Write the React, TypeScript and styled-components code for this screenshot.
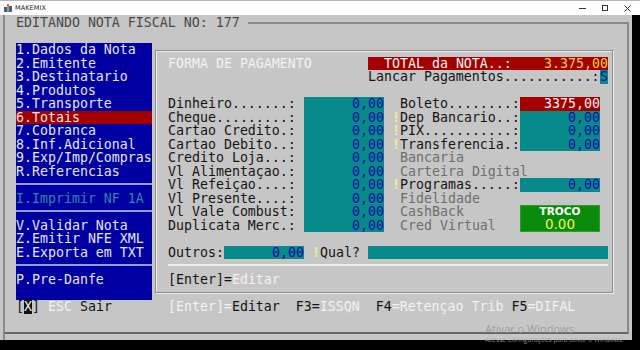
import styled, { createGlobalStyle } from "styled-components";

const CH = 8;
const ROW = 13.5;

const GlobalStyle = createGlobalStyle`
  html, body { margin: 0; padding: 0; background: #000; }
  body { font-family: "DejaVu Sans Mono", "Liberation Mono", monospace; }
`;

const Window = styled.div`
  position: relative;
  width: 640px;
  height: 350px;
  display: flex;
  flex-direction: column;
  background: #000;
  overflow: hidden;
`;

const TitleBar = styled.div`
  flex: none;
  height: 15px;
  box-sizing: border-box;
  border-top: 1px solid #b4b4b4;
  background: #fff;
  display: flex;
  align-items: center;
  padding: 0 9px 0 4px;
  font-family: "DejaVu Sans", sans-serif;
  font-size: 6.5px;
  color: #222;
`;

const AppName = styled.span`
  margin-left: 3px;
  flex: 1;
  letter-spacing: 0.1px;
`;

const Controls = styled.div`
  display: flex;
  align-items: center;
  gap: 16px;
`;

const Client = styled.div`
  flex: none;
  height: 325px;
  display: flex;
`;

const Screen = styled.div`
  width: 632px;
  box-sizing: border-box;
  padding-left: 3px;
  background: #c6c6c6;
  display: flex;
`;

const Frame = styled.div`
  flex: 1;
  display: flex;
  flex-direction: column;
  border-left: 2px solid #8a8a8a;
`;

const HeaderRow = styled.div`
  flex: none;
  height: 16px;
  display: flex;
`;

const Caption = styled.div`
  margin-left: 11px;
  font-size: 13.28px;
  line-height: 16px;
  color: #4a4a4a;
  white-space: pre;
`;

const HeaderRule = styled.div`
  flex: 1;
  margin: 7px 3px 0 8px;
  border-top: 2px solid #8a8a8a;
  border-right: 2px solid #8a8a8a;
`;

const Body = styled.div`
  flex: 1;
  margin: 0 3px 6px 0;
  border-right: 2px solid #8a8a8a;
  border-bottom: 2px solid #666;
  display: flex;
  flex-direction: column;
  font-size: 13.28px;
  line-height: ${ROW}px;
  white-space: pre;
`;

const Workspace = styled.div`
  display: flex;
  align-items: flex-start;
  padding: 12px 0 0 11px;
`;

const Menu = styled.div`
  width: ${17 * CH}px;
  background: #0000a2;
  padding-bottom: ${ROW}px;
`;

const MenuItem = styled.div<{ $active?: boolean; $dim?: boolean }>`
  height: ${ROW}px;
  color: ${(p) => (p.$dim ? "#2e86a8" : "#e6e6e6")};
  background: ${(p) => (p.$active ? "#a40000" : "transparent")};
`;

const MenuSep = styled.div`
  height: ${ROW}px;
  display: flex;
  align-items: center;
  &::after {
    content: "";
    flex: 1;
    height: 2px;
    margin-top: -2px;
    background: #9a9ad6;
  }
`;

const Panel = styled.div`
  margin: 7px 0 0 3px;
  width: 458px;
  height: 243px;
  box-sizing: border-box;
  padding: 5.5px 0 0 12px;
  border: 1px solid #8c8c8c;
  box-shadow: inset 1px 1px 0 #ececec, 1px 1px 0 #ececec;
  color: #141414;
`;

const Line = styled.div<{ $indent?: number }>`
  display: flex;
  height: ${ROW}px;
  padding-left: ${(p) => (p.$indent ?? 0) * CH}px;
`;

const Cell = styled.span<{ $w: number; $tone?: "light" | "off" | "dark" }>`
  flex: none;
  width: ${(p) => p.$w * CH}px;
  overflow: visible;
  color: ${(p) => (p.$tone === "light" ? "#f2f2f2" : p.$tone === "off" ? "#6e6e6e" : "#141414")};
`;

const Light = styled.span`
  color: #f2f2f2;
`;

const TotalBar = styled.div`
  width: ${30 * CH}px;
  display: flex;
  justify-content: space-between;
  padding-left: ${2 * CH}px;
  box-sizing: border-box;
  background: #a40000;
  color: #f2f2f2;
`;

const TotalValue = styled.span`
  color: #f6cf45;
`;

const Field = styled.span<{ $w?: number; $tone?: "teal" | "red" }>`
  flex: none;
  width: ${(p) => (p.$w ?? 10) * CH}px;
  height: ${ROW}px;
  text-align: right;
  background: ${(p) => (p.$tone === "red" ? "#a40000" : "#088a8a")};
  color: ${(p) => (p.$tone === "red" ? "#f4f4f4" : "#0c0ca8")};
`;

const Marker = styled.span`
  flex: none;
  width: ${CH}px;
  text-align: center;
  font-weight: bold;
  color: #f6f27e;
`;

const Gap = styled.span<{ $w?: number }>`
  flex: none;
  width: ${(p) => (p.$w ?? 1) * CH}px;
`;

const PayBlock = styled.div`
  display: flex;
`;

const Column = styled.div`
  display: flex;
  flex-direction: column;
`;

const TrocoRow = styled.div`
  display: flex;
`;

const TrocoBox = styled.div`
  width: ${10 * CH}px;
  height: ${2 * ROW}px;
  box-sizing: border-box;
  background: #0a8a0a;
  border: 1px solid #2aa02a;
  display: flex;
  flex-direction: column;
  align-items: center;
  justify-content: center;
  font-family: "DejaVu Sans", "Liberation Sans", sans-serif;
  white-space: normal;
`;

const TrocoTitle = styled.span`
  font-size: 10.5px;
  font-weight: bold;
  line-height: 11px;
  color: #fff;
`;

const TrocoValue = styled.span`
  font-size: 13.5px;
  line-height: 14px;
  color: #f2f85a;
`;

const RuleLine = styled.div`
  height: ${ROW}px;
  width: ${55 * CH}px;
  display: flex;
  align-items: center;
  &::after {
    content: "";
    flex: 1;
    height: 2px;
    margin-top: -1px;
    background: #eeeeee;
  }
`;

const StatusRow = styled.div`
  display: flex;
  height: ${ROW}px;
  padding-left: 11px;
  color: #141414;
`;

const Inverse = styled.span`
  background: #111;
  color: #f2f2f2;
`;

const Watermark = styled.div`
  position: absolute;
  left: 485px;
  top: 323px;
  font-family: "Open Sans", "DejaVu Sans", sans-serif;
  color: rgba(150, 150, 150, 0.85);
  line-height: 1;
`;

const WatermarkTitle = styled.div`
  font-size: 11px;
`;

const WatermarkNote = styled.div`
  margin-top: 3px;
  font-size: 6.6px;
  color: rgba(175, 175, 175, 0.8);
`;

type MenuEntry = { label?: string; active?: boolean; dim?: boolean; sep?: boolean };

const menu: MenuEntry[] = [
  { label: "1.Dados da Nota" },
  { label: "2.Emitente" },
  { label: "3.Destinatario" },
  { label: "4.Produtos" },
  { label: "5.Transporte" },
  { label: "6.Totais", active: true },
  { label: "7.Cobranca" },
  { label: "8.Inf.Adicional" },
  { label: "9.Exp/Imp/Compras" },
  { label: "R.Referencias" },
  { sep: true },
  { label: "I.Imprimir NF 1A", dim: true },
  { sep: true },
  { label: "V.Validar Nota" },
  { label: "Z.Emitir NFE XML" },
  { label: "E.Exporta em TXT" },
  { sep: true },
  { label: "P.Pre-Danfe" },
];

const leftRows = [
  "Dinheiro.......:",
  "Cheque.........:",
  "Cartao Credito.:",
  "Cartao Debito..:",
  "Credito Loja...:",
  "Vl Alimentaçao.:",
  "Vl Refeiçao....:",
  "Vl Presente....:",
  "Vl Vale Combust:",
  "Duplicata Merc.:",
];

type RightRow = { label: string; value?: string; tone?: "red" | "teal"; mark?: boolean };

const rightRows: RightRow[] = [
  { label: "Boleto........:", value: "3375,00", tone: "red" },
  { label: "Dep Bancario..:", value: "0,00", tone: "teal", mark: true },
  { label: "PIX...........:", value: "0,00", tone: "teal", mark: true },
  { label: "Transferencia.:", value: "0,00", tone: "teal", mark: true },
  { label: "Bancaria" },
  { label: "Carteira Digital" },
  { label: "Programas.....:", value: "0,00", tone: "teal", mark: true },
  { label: "Fidelidade" },
];

function AppIcon() {
  return (
    <svg width="8" height="8" viewBox="0 0 8 8">
      <rect x="0" y="3" width="3" height="5" fill="#2b5fc4" />
      <rect x="3" y="1" width="2" height="7" fill="#e08a1e" />
      <rect x="5" y="2" width="3" height="6" fill="#2b5fc4" />
      <circle cx="4" cy="1" r="1" fill="#d23a2a" />
    </svg>
  );
}

function WinControls() {
  return (
    <Controls>
      <svg width="7" height="7" viewBox="0 0 7 7">
        <line x1="0" y1="3.5" x2="7" y2="3.5" stroke="#333" strokeWidth="1" />
      </svg>
      <svg width="6" height="6" viewBox="0 0 6 6">
        <rect x="0.5" y="0.5" width="5" height="5" fill="none" stroke="#333" strokeWidth="1" />
      </svg>
      <svg width="7" height="7" viewBox="0 0 7 7">
        <path d="M0.5 0.5 L6.5 6.5 M6.5 0.5 L0.5 6.5" stroke="#333" strokeWidth="1" />
      </svg>
    </Controls>
  );
}

export default function App() {
  return (
    <Window>
      <GlobalStyle />
      <TitleBar>
        <AppIcon />
        <AppName>MAKEMIX</AppName>
        <WinControls />
      </TitleBar>
      <Client>
        <Screen>
          <Frame>
            <HeaderRow>
              <Caption>EDITANDO NOTA FISCAL NO: 177</Caption>
              <HeaderRule />
            </HeaderRow>
            <Body>
              <Workspace>
                <Menu>
                  {menu.map((m, i) =>
                    m.sep ? (
                      <MenuSep key={i} />
                    ) : (
                      <MenuItem key={i} $active={m.active} $dim={m.dim}>
                        {m.label}
                      </MenuItem>
                    )
                  )}
                </Menu>
                <Panel>
                  <Line>
                    <Cell $w={25} $tone="light">FORMA DE PAGAMENTO</Cell>
                    <TotalBar>
                      <span>TOTAL da NOTA..:</span>
                      <TotalValue>3.375,00</TotalValue>
                    </TotalBar>
                  </Line>
                  <Line $indent={25}>
                    <Cell $w={29}>Lancar Pagamentos...........:</Cell>
                    <Field $w={1}>S</Field>
                  </Line>
                  <Line />
                  <PayBlock>
                    <Column>
                      {leftRows.map((label) => (
                        <Line key={label}>
                          <Cell $w={16}>{label}</Cell>
                          <Gap />
                          <Field>0,00</Field>
                        </Line>
                      ))}
                    </Column>
                    <Gap />
                    <Column>
                      {rightRows.map((r) => (
                        <Line key={r.label}>
                          <Marker>{r.mark ? "!" : ""}</Marker>
                          <Cell $w={15} $tone={r.value ? "dark" : "off"}>
                            {r.label}
                          </Cell>
                          {r.value && <Field $tone={r.tone}>{r.value}</Field>}
                        </Line>
                      ))}
                      <TrocoRow>
                        <Gap />
                        <Column>
                          <Cell $w={15} $tone="off">CashBack</Cell>
                          <Cell $w={15} $tone="off">Cred Virtual</Cell>
                        </Column>
                        <TrocoBox>
                          <TrocoTitle>TROCO</TrocoTitle>
                          <TrocoValue>0.00</TrocoValue>
                        </TrocoBox>
                      </TrocoRow>
                    </Column>
                  </PayBlock>
                  <Line />
                  <Line>
                    <Cell $w={7}>Outros:</Cell>
                    <Field>0,00</Field>
                    <Gap />
                    <Marker>!</Marker>
                    <Cell $w={6}>Qual?</Cell>
                    <Field $w={30} />
                  </Line>
                  <RuleLine />
                  <Line>
                    <span>[Enter]=</span>
                    <Light>Editar</Light>
                  </Line>
                </Panel>
              </Workspace>
              <StatusRow>
                <Cell $w={19}>
                  [<Inverse>X</Inverse>] <Light>ESC</Light> Sair
                </Cell>
                <span>
                  <Light>[Enter]=</Light>Editar  F3=<Light>ISSQN</Light>  F4<Light>=Retençao Trib</Light> F5<Light>=DIFAL</Light>
                </span>
              </StatusRow>
            </Body>
          </Frame>
        </Screen>
      </Client>
      <Watermark>
        <WatermarkTitle>Ativar o Windows</WatermarkTitle>
        <WatermarkNote>Acesse Configurações para ativar o Windows.</WatermarkNote>
      </Watermark>
    </Window>
  );
}
